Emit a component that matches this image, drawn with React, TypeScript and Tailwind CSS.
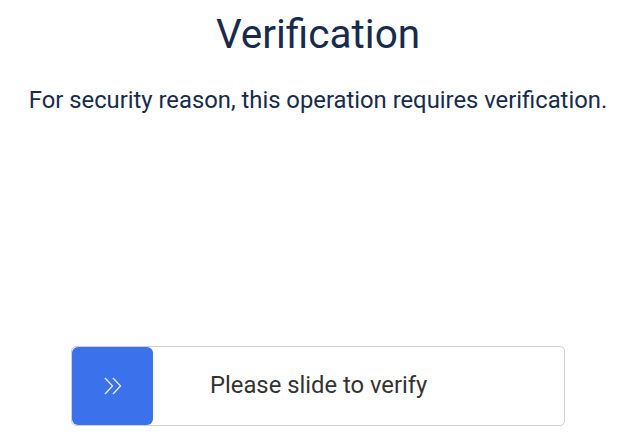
export default function App() {
  return (
    <div className="w-[636px] h-[440px] bg-white flex flex-col items-center font-['Roboto',sans-serif]">
      <h1 className="mt-[10px] text-[40.5px] leading-[48px] text-[#172b4d]">Verification</h1>
      <p className="mt-[28px] text-[23.8px] leading-[28px] text-[#172b4d]">For security reason, this operation requires verification.</p>
      <div className="mt-auto mb-[14px] w-[494px] h-[80px] border border-[#d0d0d0] rounded-[5px] flex items-center">
        <div className="w-[81px] h-[78px] bg-[#3b71eb] rounded-[6px] flex items-center justify-center">
          <svg width="20" height="18" viewBox="0 0 20 18" fill="none" stroke="#e6eeff" strokeWidth="1.3">
            <path d="M2 1l7.5 8L2 17" />
            <path d="M10 1l7.5 8L10 17" />
          </svg>
        </div>
        <span className="ml-[57px] text-[23.8px] text-[#333]">Please slide to verify</span>
      </div>
    </div>
  );
}
